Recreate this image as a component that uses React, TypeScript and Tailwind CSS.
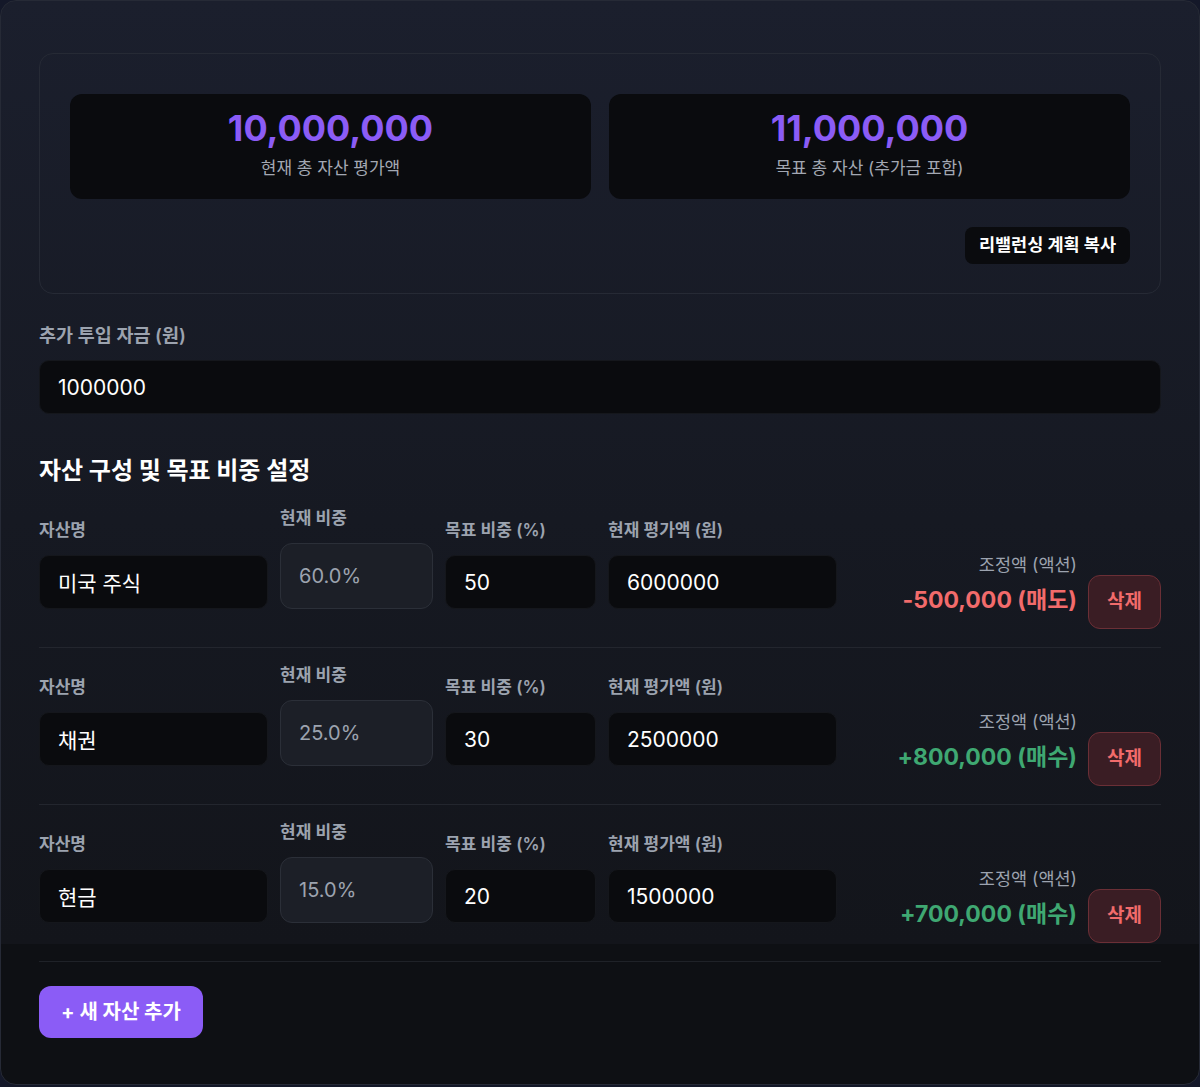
import React, { useState } from 'react'

interface Asset {
  id: number
  name: string
  target: string
  value: string
}

const initialAssets: Asset[] = [
  { id: 1, name: '미국 주식', target: '50', value: '6000000' },
  { id: 2, name: '채권', target: '30', value: '2500000' },
  { id: 3, name: '현금', target: '20', value: '1500000' },
]

const fmt = (n: number) => Math.round(n).toLocaleString('en-US')

const inputClass =
  'h-[54px] w-full rounded-[10px] border border-[#15171c] bg-[#0a0b0e] px-[18px] text-[21px] text-white outline-none'

const labelClass = 'mb-[15px] block text-[17px] font-semibold leading-5 text-[#9ca3af]'

export default function App() {
  const [extra, setExtra] = useState('1000000')
  const [assets, setAssets] = useState<Asset[]>(initialAssets)

  const total = assets.reduce((sum, a) => sum + (Number(a.value) || 0), 0)
  const targetTotal = total + (Number(extra) || 0)

  const update = (id: number, key: keyof Asset, v: string) => {
    setAssets(prev => prev.map(a => (a.id === id ? { ...a, [key]: v } : a)))
  }

  const addAsset = () => {
    setAssets(prev => [...prev, { id: Date.now(), name: '', target: '0', value: '0' }])
  }

  return (
    <div
      className="min-h-screen bg-[#141829] text-white"
      style={{ fontFamily: 'Inter, "Noto Sans CJK KR", sans-serif' }}
    >
      <div className="rounded-2xl border border-[#262a36] bg-[#0e1014] bg-[linear-gradient(to_bottom,#1b1f2d,#161922_55%,#13151b)] bg-[length:100%_943px] bg-no-repeat px-[38px] pt-[52px] pb-[46px]">
        {/* Totals */}
        <div className="rounded-[14px] border border-[#262a35] px-[30px] pt-[40px] pb-[29px]">
          <div className="grid grid-cols-2 gap-[18px]">
            <div className="flex flex-col items-center rounded-xl bg-[#0a0b0e] pt-[14px] pb-[19px]">
              <div className="text-4xl font-bold leading-10 text-[#8b5cf6]">{fmt(total)}</div>
              <div className="mt-2 text-[17px] leading-6 text-[#a3a8b3]">현재 총 자산 평가액</div>
            </div>
            <div className="flex flex-col items-center rounded-xl bg-[#0a0b0e] pt-[14px] pb-[19px]">
              <div className="text-4xl font-bold leading-10 text-[#8b5cf6]">{fmt(targetTotal)}</div>
              <div className="mt-2 text-[17px] leading-6 text-[#a3a8b3]">목표 총 자산 (추가금 포함)</div>
            </div>
          </div>
          <div className="mt-[28px] flex justify-end">
            <button className="h-[37px] rounded-lg bg-[#0a0b0e] px-[14px] text-[17.5px] font-bold text-white">
              리밸런싱 계획 복사
            </button>
          </div>
        </div>

        {/* Extra cash */}
        <label className="mt-[29px] mb-[13px] block text-[18.5px] font-semibold leading-6 text-[#9ca3af]">
          추가 투입 자금 (원)
        </label>
        <input className={inputClass} value={extra} onChange={e => setExtra(e.target.value)} />

        <h2 className="mt-[42px] mb-[5px] text-2xl font-bold leading-[30px] text-white">
          자산 구성 및 목표 비중 설정
        </h2>

        {/* Asset rows */}
        <div>
          {assets.map((a, i) => {
            const value = Number(a.value) || 0
            const ratio = total > 0 ? (value / total) * 100 : 0
            const diff = (targetTotal * (Number(a.target) || 0)) / 100 - value
            const isLast = i === assets.length - 1
            return (
              <div
                key={a.id}
                className={`flex items-start pt-[17px] pb-[18px] ${isLast ? '' : 'border-b border-[#23262e]'}`}
              >
                <div className="flex items-end gap-[12px]">
                  <div className="w-[229px]">
                    <label className={labelClass}>자산명</label>
                    <input className={inputClass} value={a.name} onChange={e => update(a.id, 'name', e.target.value)} />
                  </div>
                  <div className="w-[153px]">
                    <label className={labelClass}>현재 비중</label>
                    <div className="flex h-[66px] items-center rounded-xl border border-[#2b2f38] bg-[#1c1f27] px-[18px] text-xl text-[#9ca3af]">
                      {ratio.toFixed(1)}%
                    </div>
                  </div>
                  <div className="w-[151px]">
                    <label className={labelClass}>목표 비중 (%)</label>
                    <input className={inputClass} value={a.target} onChange={e => update(a.id, 'target', e.target.value)} />
                  </div>
                  <div className="w-[229px]">
                    <label className={labelClass}>현재 평가액 (원)</label>
                    <input className={inputClass} value={a.value} onChange={e => update(a.id, 'value', e.target.value)} />
                  </div>
                </div>

                <div className="ml-auto mt-[47px] flex items-start gap-[11px]">
                  <div className="text-right">
                    <div className="mb-[10px] text-[17.5px] leading-5 text-[#9ca3af]">조정액 (액션)</div>
                    <div
                      className={`text-[23px] font-bold leading-[30px] ${
                        diff < 0 ? 'text-[#f26b6b]' : 'text-[#3fa872]'
                      }`}
                    >
                      {diff < 0 ? `-${fmt(-diff)} (매도)` : `+${fmt(diff)} (매수)`}
                    </div>
                  </div>
                  <button
                    onClick={() => setAssets(prev => prev.filter(x => x.id !== a.id))}
                    className="mt-[20px] h-[54px] w-[73px] rounded-xl border border-[#6b2f36] bg-[#3a1d24] text-[19px] font-bold text-[#f26b6b]"
                  >
                    삭제
                  </button>
                </div>
              </div>
            )
          })}
        </div>

        {/* Footer */}
        <div className="border-t border-[#1f2228] pt-[24px]">
          <button
            onClick={addAsset}
            className="h-[52px] w-[164px] rounded-xl bg-[#8b5cf6] text-[20px] font-bold text-white"
          >
            + 새 자산 추가
          </button>
        </div>
      </div>
    </div>
  )
}
